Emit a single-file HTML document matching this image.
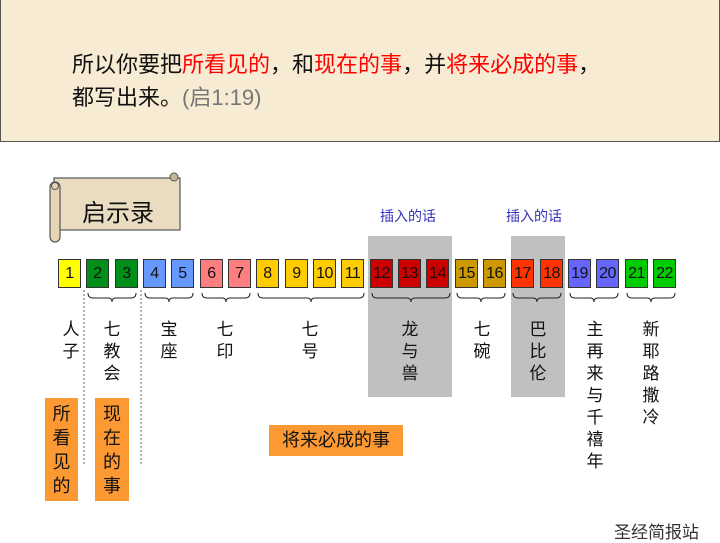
<!DOCTYPE html>
<html><head><meta charset="utf-8"><style>
body{margin:0;width:720px;height:540px;position:relative;background:#fff;font-family:"Liberation Sans","Noto Sans CJK SC",sans-serif;overflow:hidden}
.a{position:absolute}
.top{left:0;top:0;width:718px;height:141px;background:#f8ebd3;border:1px solid #555;border-top:none}
.r{color:#f00}
.b{position:absolute;top:259px;width:21px;height:27px;border:1px solid #333;font-size:16px;text-align:center;line-height:27px;color:#111;letter-spacing:-0.5px}
.v{position:absolute;width:20px;font-size:17px;line-height:22px;text-align:center;color:#111}
.o{position:absolute;background:#fd9933;font-size:18px;color:#111;text-align:center}
.g{position:absolute;background:#c0c0c0;top:236px;height:161px}
.ins{position:absolute;top:206px;font-size:14px;color:#3333bb}
</style></head><body>
<div class="a top"></div>
<div class="a" style="left:72px;top:48px;font-size:22px;line-height:33px;color:#111">所以你要把<span class="r">所看见的</span>，和<span class="r">现在的事</span>，并<span class="r">将来必成的事</span>，<br>都写出来。<span style="color:#777">(启1:19)</span></div>

<svg class="a" style="left:48px;top:170px" width="136" height="74">
<rect x="6" y="8" width="126" height="52" fill="#eadcc0" stroke="#555" stroke-width="1.2"/>
<rect x="2" y="12" width="10" height="60" rx="5" fill="#e5d5b5" stroke="#555" stroke-width="1.2"/>
<circle cx="7" cy="16" r="3.5" fill="none" stroke="#555"/>
<circle cx="126" cy="7" r="4" fill="#c8b69a" stroke="#555"/>
</svg>
<div class="a" style="left:82px;top:193px;font-size:24px;color:#111">启示录</div>

<div class="g" style="left:368px;width:84px"></div>
<div class="g" style="left:511px;width:54px"></div>
<div class="ins" style="left:380px">插入的话</div>
<div class="ins" style="left:506px">插入的话</div>

<div class="b" style="left:58px;background:#ff0">1</div>
<div class="b" style="left:86px;background:#00901a">2</div>
<div class="b" style="left:115px;background:#00901a">3</div>
<div class="b" style="left:143px;background:#6699ff">4</div>
<div class="b" style="left:171px;background:#6699ff">5</div>
<div class="b" style="left:200px;background:#ff7f80">6</div>
<div class="b" style="left:228px;background:#ff7f80">7</div>
<div class="b" style="left:256px;background:#ffcc00">8</div>
<div class="b" style="left:285px;background:#ffcc00">9</div>
<div class="b" style="left:313px;background:#ffcc00">10</div>
<div class="b" style="left:341px;background:#ffcc00">11</div>
<div class="b" style="left:370px;background:#cc0000">12</div>
<div class="b" style="left:398px;background:#cc0000">13</div>
<div class="b" style="left:426px;background:#cc0000">14</div>
<div class="b" style="left:455px;background:#cc9900">15</div>
<div class="b" style="left:483px;background:#cc9900">16</div>
<div class="b" style="left:511px;background:#ff3300">17</div>
<div class="b" style="left:540px;background:#ff3300">18</div>
<div class="b" style="left:568px;background:#6666ff">19</div>
<div class="b" style="left:596px;background:#6666ff">20</div>
<div class="b" style="left:625px;background:#00cc00">21</div>
<div class="b" style="left:653px;background:#00cc00">22</div>

<svg class="a" style="left:0;top:0" width="720" height="540" fill="none" stroke="#222" stroke-width="1">
<path d="M88 293 q0 5 5 5 h15 q4 0 4 4 q0 -4 4 -4 h15 q5 0 5 -5"/>
<path d="M145 293 q0 5 5 5 h15 q4 0 4 4 q0 -4 4 -4 h15 q5 0 5 -5"/>
<path d="M202 293 q0 5 5 5 h15 q4 0 4 4 q0 -4 4 -4 h15 q5 0 5 -5"/>
<path d="M258 293 q0 5 5 5 h44 q4 0 4 4 q0 -4 4 -4 h44 q5 0 5 -5"/>
<path d="M372 293 q0 5 5 5 h30 q4 0 4 4 q0 -4 4 -4 h30 q5 0 5 -5"/>
<path d="M457 293 q0 5 5 5 h15 q4 0 4 4 q0 -4 4 -4 h15 q5 0 5 -5"/>
<path d="M513 293 q0 5 5 5 h15 q4 0 4 4 q0 -4 4 -4 h15 q5 0 5 -5"/>
<path d="M570 293 q0 5 5 5 h15 q4 0 4 4 q0 -4 4 -4 h15 q5 0 5 -5"/>
<path d="M627 293 q0 5 5 5 h15 q4 0 4 4 q0 -4 4 -4 h15 q5 0 5 -5"/>
<line x1="84" y1="290" x2="84" y2="464" stroke="#666" stroke-dasharray="2,2"/>
<line x1="141" y1="290" x2="141" y2="464" stroke="#666" stroke-dasharray="2,2"/>
</svg>

<div class="v" style="left:61px;top:319px">人<br>子</div>
<div class="v" style="left:102px;top:319px">七<br>教<br>会</div>
<div class="v" style="left:159px;top:319px">宝<br>座</div>
<div class="v" style="left:215px;top:319px">七<br>印</div>
<div class="v" style="left:300px;top:319px">七<br>号</div>
<div class="v" style="left:400px;top:319px">龙<br>与<br>兽</div>
<div class="v" style="left:472px;top:319px">七<br>碗</div>
<div class="v" style="left:528px;top:319px">巴<br>比<br>伦</div>
<div class="v" style="left:585px;top:319px">主<br>再<br>来<br>与<br>千<br>禧<br>年</div>
<div class="v" style="left:641px;top:319px">新<br>耶<br>路<br>撒<br>冷</div>

<div class="o" style="left:45px;top:398px;width:33px;height:103px;line-height:24px;padding-top:4px;box-sizing:border-box">所<br>看<br>见<br>的</div>
<div class="o" style="left:95px;top:398px;width:34px;height:103px;line-height:24px;padding-top:4px;box-sizing:border-box">现<br>在<br>的<br>事</div>
<div class="o" style="left:269px;top:425px;width:134px;height:31px;line-height:31px">将来必成的事</div>

<div class="a" style="left:614px;top:518px;font-size:17px;color:#333">圣经简报站</div>
</body></html>
